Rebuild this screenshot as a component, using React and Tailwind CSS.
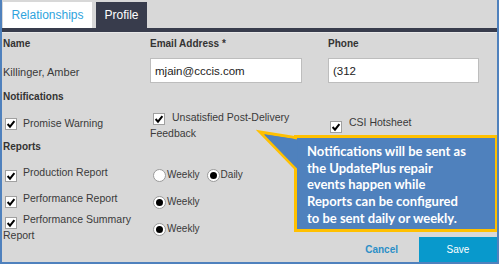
import React from 'react';

const font = { fontFamily: '"Liberation Sans", Arial, sans-serif' };

function Check() {
  return (
    <span className="flex h-[12px] w-[12px] shrink-0 items-center justify-center border border-[#a0a0a0] bg-white">
      <svg width="10" height="10" viewBox="0 0 10 10">
        <path d="M1.6 5 L4 7.6 L8.4 2.2" fill="none" stroke="#000" strokeWidth="2" />
      </svg>
    </span>
  );
}

function Radio({ on }) {
  return (
    <span className="flex h-[13px] w-[13px] shrink-0 items-center justify-center rounded-full border border-[#9a9a9a] bg-white">
      {on && <span className="h-[7px] w-[7px] rounded-full bg-black" />}
    </span>
  );
}

function Callout() {
  return (
    <div className="absolute left-[254px] top-[129px] h-[105px] w-[243px]">
      <svg className="absolute left-0 top-0" width="60" height="60" viewBox="0 0 60 60">
        <path d="M4 3 L42 9 L42 42 Z" fill="#4f81bd" stroke="#ffc000" strokeWidth="3" strokeLinejoin="miter" />
      </svg>
      <div
        className="absolute left-[38px] top-[6px] h-[97px] w-[204px] border-[3px] border-[#ffc000] bg-[#4f81bd] pl-[10px] pt-[5px] text-[13px] font-bold leading-[16.7px] text-white"
        style={{ fontFamily: 'Lato, "Open Sans", sans-serif' }}
      >
        Notifications will be sent as<br />
        the UpdatePlus repair<br />
        events happen while<br />
        Reports can be configured<br />
        to be sent daily or weekly.
      </div>
      <svg className="absolute left-0 top-0" width="60" height="60" viewBox="0 0 60 60">
        <path d="M8 5.5 L41.5 10.5 L41.5 40 Z" fill="#4f81bd" />
      </svg>
    </div>
  );
}

export default function App() {
  return (
    <div className="relative h-[264px] w-[499px] overflow-hidden border-x-2 border-b-2 border-[#4f81bd] bg-[#d8d8d8] text-[10.5px] text-[#3a3a3a]" style={font}>
      <div className="flex h-[28px] items-end gap-[4px] pl-[1px]">
        <div className="flex h-[26px] w-[89px] items-center justify-center bg-white text-[12px] text-[#2ea3dd]">Relationships</div>
        <div className="flex h-[26px] w-[51px] items-center justify-center bg-[#383c4c] text-[12px] text-white">Profile</div>
      </div>
      <div className="h-[4px] bg-[#383c4c]" />
      <div className="h-[1px] bg-[#e8e8e8]" />

      <div className="grid grid-cols-[147px_178px_1fr] pl-[1px] leading-[14px]">
        {/* labels */}
        <div className="h-[25px] pt-[4px] text-[10px] font-bold text-[#333]">Name</div>
        <div className="h-[25px] pt-[4px] text-[10px] font-bold text-[#333]">Email Address *</div>
        <div className="h-[25px] pt-[4px] text-[10px] font-bold text-[#333]">Phone</div>

        {/* values */}
        <div className="flex h-[27px] items-center text-[11px]">Killinger, Amber</div>
        <div>
          <div className="flex h-[25px] w-[152px] items-center border border-[#bdbdbd] bg-white pl-[4px] text-[11.5px] text-[#222]">mjain@cccis.com</div>
        </div>
        <div>
          <div className="flex h-[25px] w-[151px] items-center border border-[#bdbdbd] bg-white pl-[4px] text-[11.5px] text-[#222]">(312</div>
        </div>

        <div className="col-span-3 h-[19px] pt-[5px] text-[10px] font-bold text-[#333]">Notifications</div>

        {/* notification checks */}
        <div className="flex h-[36px] items-start gap-[6px] pl-[2px]">
          <span className="mt-[14px] flex"><Check /></span>
          <span className="mt-[12px]">Promise Warning</span>
        </div>
        <div className="h-[36px] pt-[5px] leading-[16px]">
          <div className="flex h-[16px] items-start gap-[7px] pl-[3px]">
            <span className="mt-[4px] flex"><Check /></span>
            <span>Unsatisfied Post-Delivery</span>
          </div>
          <div>Feedback</div>
        </div>
        <div className="flex h-[36px] items-start gap-[7px] pl-[2px]">
          <span className="mt-[17px] flex"><Check /></span>
          <span className="mt-[11px]">CSI Hotsheet</span>
        </div>

        <div className="col-span-3 h-[14px] text-[10px] font-bold text-[#333]">Reports</div>

        {/* production */}
        <div className="flex h-[32px] items-start gap-[6px] pl-[2px]">
          <span className="mt-[16px] flex"><Check /></span>
          <span className="mt-[11px]">Production Report</span>
        </div>
        <div className="col-span-2 flex h-[32px] items-start gap-[1px] pl-[3px] text-[10px]">
          <span className="mt-[15px] flex"><Radio /></span>
          <span className="mt-[14px]">Weekly</span>
          <span className="ml-[6px] mt-[15px] flex"><Radio on /></span>
          <span className="mt-[14px]">Daily</span>
        </div>

        {/* performance */}
        <div className="flex h-[24px] items-start gap-[6px] pl-[2px]">
          <span className="mt-[10px] flex"><Check /></span>
          <span className="mt-[5px]">Performance Report</span>
        </div>
        <div className="col-span-2 flex h-[24px] items-start gap-[1px] pl-[3px] text-[10px]">
          <span className="mt-[10px] flex"><Radio on /></span>
          <span className="mt-[9px]">Weekly</span>
        </div>

        {/* performance summary */}
        <div className="pt-[1px] leading-[16px]">
          <div className="flex h-[16px] items-start gap-[6px] pl-[2px]">
            <span className="mt-[6px] flex"><Check /></span>
            <span>Performance Summary</span>
          </div>
          <div>Report</div>
        </div>
        <div className="col-span-2 flex items-start gap-[1px] pl-[3px] text-[10px]">
          <span className="mt-[13px] flex"><Radio on /></span>
          <span className="mt-[12px]">Weekly</span>
        </div>
      </div>

      <div className="absolute bottom-0 right-0 flex items-center">
        <span className="mr-[21px] text-[10px] font-bold text-[#2b8fc7]">Cancel</span>
        <div className="flex h-[25px] w-[78px] items-center justify-center bg-[#0899cc] text-[10px] text-white">Save</div>
      </div>

      <Callout />
    </div>
  );
}
